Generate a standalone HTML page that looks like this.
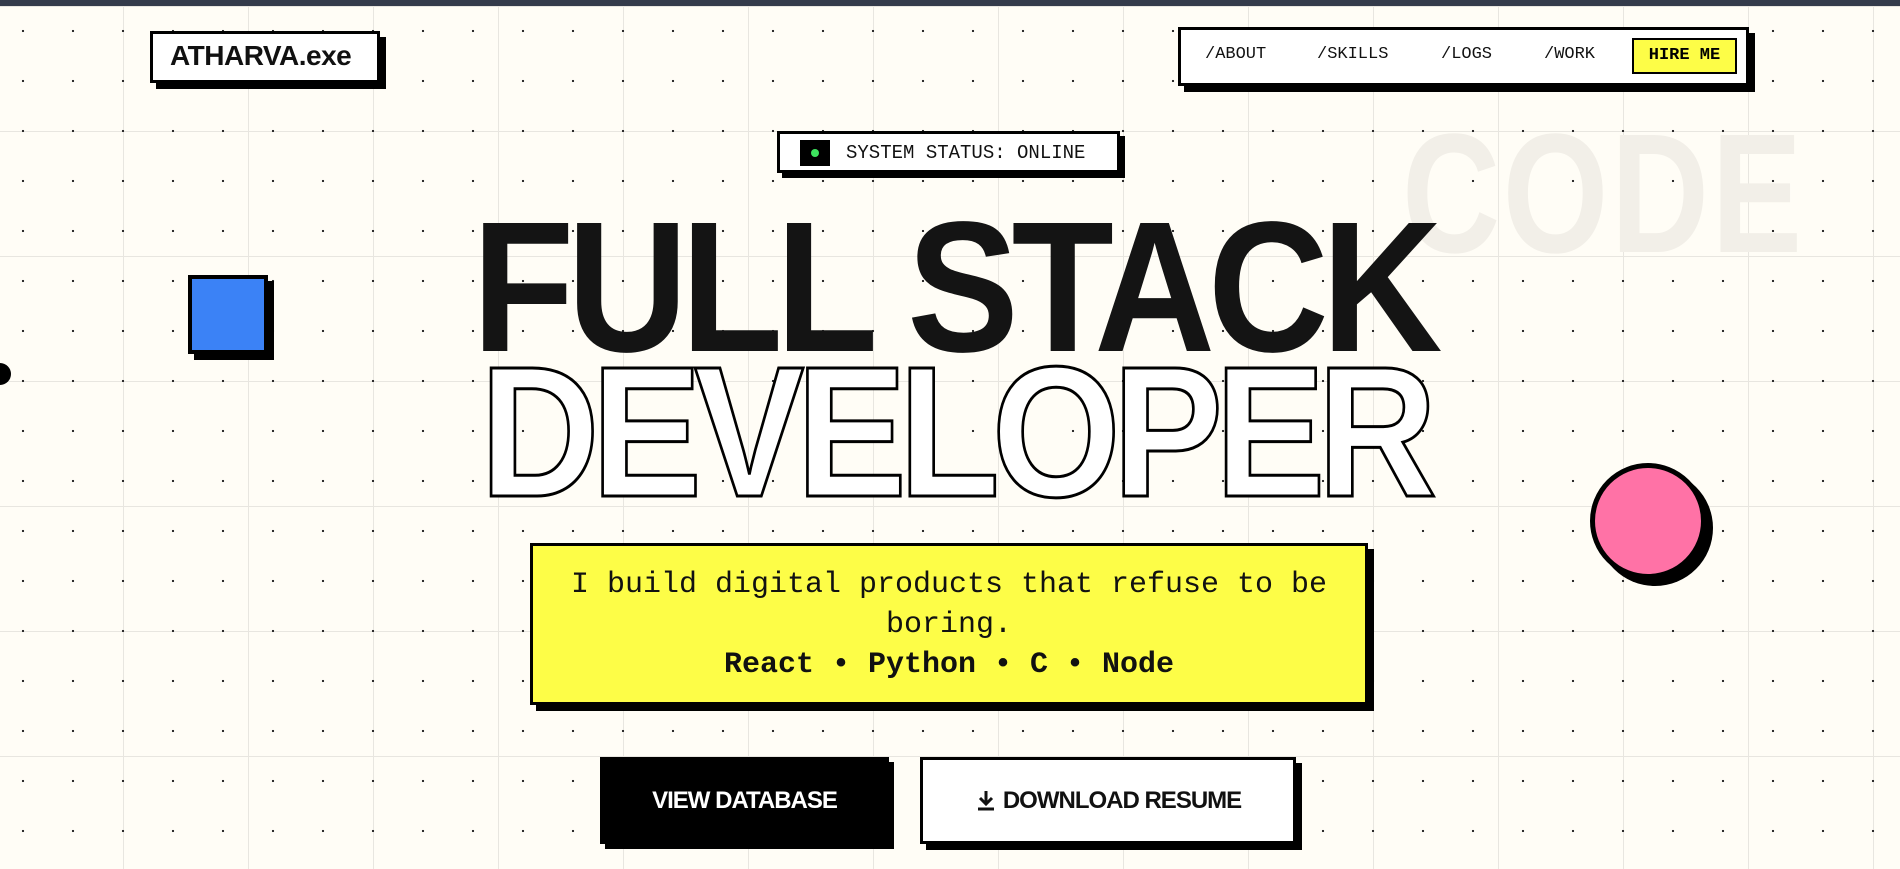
<!DOCTYPE html>
<html><head><meta charset="utf-8"><style>
*{margin:0;padding:0;box-sizing:border-box}
html,body{width:1900px;height:869px;overflow:hidden}
body{position:relative;background-color:#fffdf6;font-family:"Liberation Sans",sans-serif;
background-image:radial-gradient(circle,#222 1px,transparent 1.3px),linear-gradient(to right,#e8e6e0 1px,transparent 1px),linear-gradient(to bottom,#e8e6e0 1px,transparent 1px);
background-size:50px 50px,125px 125px,125px 125px;background-position:-2px 6px,-2px 6px,-2px 6px;}
.top{position:absolute;left:0;top:0;width:1900px;height:6px;background:#343b4b}
.box{position:absolute;border:3px solid #000;background:#fff;box-shadow:6px 6px 0 #000}
.mono{font-family:"Liberation Mono",monospace}
.abs{position:absolute;white-space:nowrap}
</style></head><body>
<div class="top"></div>
<div class="box" style="left:150px;top:31px;width:230px;height:52px"></div>
<div class="abs" style="left:170px;top:40px;font-size:28px;font-weight:bold;color:#111;letter-spacing:-0.5px">ATHARVA.exe</div>

<div class="box" style="left:1178px;top:27px;width:571px;height:59px"></div>
<div class="abs mono" style="left:1205px;top:45px;font-size:17px;color:#111">/ABOUT</div>
<div class="abs mono" style="left:1317px;top:45px;font-size:17px;color:#111">/SKILLS</div>
<div class="abs mono" style="left:1441px;top:45px;font-size:17px;color:#111">/LOGS</div>
<div class="abs mono" style="left:1544px;top:45px;font-size:17px;color:#111">/WORK</div>
<div class="abs mono" style="left:1632px;top:38px;width:105px;height:36px;background:#fdfd47;border:2px solid #000;font-size:17px;font-weight:bold;line-height:32px;text-align:center">HIRE ME</div>

<div class="abs" style="left:1402px;top:96px;font-size:170px;font-weight:bold;color:#f2efe8;transform:scaleX(0.8);transform-origin:left;letter-spacing:3px">CODE</div>

<div class="box" style="left:777px;top:131px;width:343px;height:42px;box-shadow:5px 5px 0 #000"></div>
<div class="abs" style="left:800px;top:140px;width:30px;height:26px;background:#000"><div style="position:absolute;left:11px;top:9px;width:8px;height:8px;border-radius:50%;background:#3ee35e"></div></div>
<div class="abs mono" style="left:846px;top:142px;font-size:19px;color:#111">SYSTEM STATUS: ONLINE</div>

<div class="abs" style="left:472px;top:195px;font-size:186px;font-weight:bold;color:#141414;letter-spacing:-8px;transform:scaleX(0.9);transform-origin:left;line-height:1">FULL STACK</div>
<div class="abs" style="left:480px;top:340px;font-size:186px;font-weight:bold;color:#fff;-webkit-text-stroke:3px #000;letter-spacing:-9px;transform:scaleX(0.89);transform-origin:left;line-height:1">DEVELOPER</div>

<div class="abs" style="left:188px;top:275px;width:80px;height:79px;background:#3b82f6;border:4px solid #000;box-shadow:6px 6px 0 #000"></div>
<div class="abs" style="left:-11px;top:363px;width:22px;height:22px;border-radius:50%;background:#000"></div>
<div class="abs" style="left:1590px;top:463px;width:116px;height:116px;border-radius:50%;background:#ff72a6;border:5px solid #000;box-shadow:7px 7px 0 #000"></div>

<div class="box" style="left:530px;top:543px;width:838px;height:162px;background:#fdfd47"></div>
<div class="abs mono" style="left:530px;top:565px;width:838px;text-align:center;white-space:normal;font-size:30px;line-height:40px;color:#111;padding:0 20px">I build digital products that refuse to be boring.<br><b>React • Python • C • Node</b></div>

<div class="abs" style="left:600px;top:757px;width:289px;height:87px;background:#000;box-shadow:5px 5px 0 #000;color:#fff;font-weight:bold;font-size:24px;letter-spacing:-1px;text-align:center;line-height:87px">VIEW DATABASE</div>
<div class="box" style="left:920px;top:757px;width:376px;height:87px;color:#111;font-weight:bold;font-size:24px;letter-spacing:-1px;text-align:center;line-height:81px">
<svg width="22" height="22" viewBox="0 0 22 22" style="vertical-align:-3px;margin-right:6px"><path d="M11 2v13M5 9l6 6 6-6M3 20h16" stroke="#111" stroke-width="3" fill="none"/></svg>DOWNLOAD RESUME</div>
</body></html>
